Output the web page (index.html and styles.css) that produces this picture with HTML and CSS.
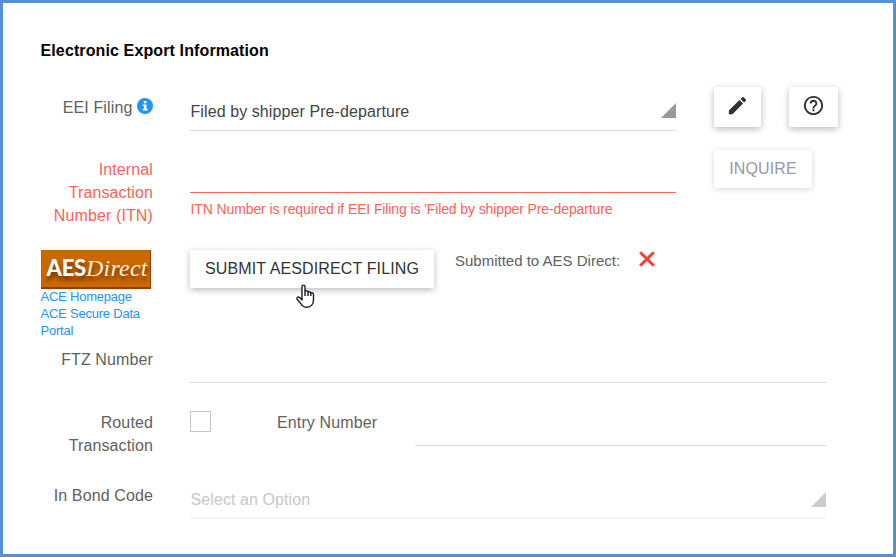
FILE: index.html
```
<!DOCTYPE html>
<html lang="en">
<head>
<meta charset="utf-8">
<title>Electronic Export Information</title>
<link rel="stylesheet" href="styles.css">
</head>
<body>
<main class="panel">
  <h1 class="title">Electronic Export Information</h1>
  <form class="form">
    <div class="row row-eei">
      <div class="label">EEI Filing <svg class="info" viewBox="0 0 16 16"><circle cx="8" cy="8" r="8" fill="#2196f3"/><path d="M6.8 3h2.6v2.2H6.8zM5.7 6.4h3.7v4.4h1.2v1.7H5.7v-1.7h1.2V8.1H5.7z" fill="#fff"/></svg></div>
      <div class="field medium"><span class="value">Filed by shipper Pre-departure</span><svg class="corner" viewBox="0 0 15 15"><path d="M15 0v15H0z"/></svg></div>
      <div class="actions">
        <button type="button" class="btn edit" aria-label="Edit"><svg viewBox="0 0 24 24"><path d="M3 17.25V21h3.75L17.81 9.94l-3.75-3.75L3 17.25zM20.71 7.04a1 1 0 0 0 0-1.41l-2.34-2.34a1 1 0 0 0-1.41 0l-1.83 1.83 3.75 3.75 1.83-1.83z"/></svg></button>
        <button type="button" class="btn help" aria-label="Help"><svg viewBox="0 0 24 24"><path d="M11 18h2v-2h-2v2zm1-16C6.48 2 2 6.48 2 12s4.48 10 10 10 10-4.48 10-10S17.52 2 12 2zm0 18c-4.41 0-8-3.59-8-8s3.59-8 8-8 8 3.59 8 8-3.59 8-8 8zm0-14c-2.21 0-4 1.79-4 4h2c0-1.1.9-2 2-2s2 .9 2 2c0 2-3 1.75-3 5h2c0-2.25 3-2.5 3-5 0-2.21-1.79-4-4-4z"/></svg></button>
      </div>
    </div>
    <div class="row row-itn">
      <div class="label invalid">Internal Transaction Number (ITN)</div>
      <div class="medium"><div class="field field-error"></div><div class="error">ITN Number is required if EEI Filing is 'Filed by shipper Pre-departure</div></div>
      <button type="button" class="btn inquire">INQUIRE</button>
    </div>
    <div class="row row-aes">
      <div class="portal">
        <div class="logo"><b>AES</b><i>Direct</i></div>
        <a>ACE Homepage</a><a>ACE Secure Data Portal</a>
      </div>
      <div class="submit-group">
        <button type="button" class="btn submit">SUBMIT AESDIRECT FILING</button>
        <svg class="cursor" viewBox="0 0 19 25"><path d="M6 16V2.8C6 .5 9 .5 9 2.8v4.6c.7-1 2.7-.7 3 .7.8-.8 2.5-.4 2.8.9 1.200-.7 2.700 0 2.700 1.500V16c0 4-2.500 7.300-6.500 7.300-3 0-4.500-1.200-6-3.500L1.300 15.500c-1.200-2 .8-3.400 2.400-1.900L6 16zM9 7.400V12M12 8.100V12M14.800 9V12" fill="#fff" stroke="#1c1c2b" stroke-width="1.400" stroke-linejoin="round"/></svg>
      </div>
      <span class="status">Submitted to AES Direct:</span>
      <svg class="cross" viewBox="0 0 16 16"><path d="M1.200 1.200l13.600 13.600M14.800 1.200L1.200 14.800" stroke="#f44336" stroke-width="3"/></svg>
    </div>
    <div class="row row-ftz">
      <div class="label">FTZ Number</div>
      <div class="field wide"></div>
    </div>
    <div class="row row-routed">
      <div class="label">Routed Transaction</div>
      <div class="checkbox"></div>
      <div class="entry-label">Entry Number</div>
      <div class="field entry"></div>
    </div>
    <div class="row row-bond">
      <div class="label">In Bond Code</div>
      <div class="field wide disabled"><span class="value">Select an Option</span><svg class="corner" viewBox="0 0 15 15"><path d="M15 0v15H0z"/></svg></div>
    </div>
  </form>
</main>
</body>
</html>
```
FILE: styles.css
```
* { box-sizing: border-box; }
body {
  margin: 0;
  font-family: "Liberation Sans", Arial, sans-serif;
  font-size: 16px;
  line-height: 23px;
  letter-spacing: .12px;
  color: #616161;
  background: #fff;
}
.panel {
  width: 896px;
  height: 557px;
  border: 3px solid #5590d5;
  padding: 36px 0 0 37px;
  overflow: hidden;
}
.title { margin: 0; padding-left: .5px; height: 57px; font-size: 16px; line-height: 23px; color: #000; }
.row { display: flex; align-items: flex-start; }
.row-eei { height: 62px; }
.row-itn { height: 90px; }
.row-aes { height: 100px; }
.row-ftz { height: 63px; }
.row-routed { height: 73px; }
.row-bond { height: 63px; }
.label { width: 113px; margin-right: 37px; flex: none; text-align: right; }
.invalid { color: #f9645c; }
.info { width: 16px; height: 16px; vertical-align: -1px; }
.field {
  display: flex;
  justify-content: space-between;
  height: 35px;
  border-bottom: 1px solid #dcdcdc;
}
.medium { width: 486px; flex: none; }
.wide { width: 636px; }
.entry { width: 411px; }
.field-error { border-color: #f9645c; }
.value { padding: 4px 0 0 .5px; letter-spacing: .09px; color: #444; }
.corner { width: 15px; height: 15px; margin-top: 7px; fill: #999; }
.disabled { border-color: #ededed; }
.disabled .value { color: #c8c8c8; }
.disabled .corner { margin-top: 8px; fill: #ccc; }
.error { font-size: 14px; line-height: 20px; letter-spacing: -.11px; padding: 6px 0 0 .5px; color: #f9645c; white-space: nowrap; }
.actions { display: flex; gap: 28px; margin: -9px 0 0 38px; }
.btn {
  display: flex;
  justify-content: center;
  align-items: center;
  padding: 0;
  border: 0;
  border-radius: 2px;
  background: #fff;
  color: #333;
  font: inherit;
  letter-spacing: .13px;
  box-shadow: 0 2px 7px rgba(0, 0, 0, .28);
}
.btn svg { width: 23px; height: 23px; fill: #303036; margin-bottom: 3px; }
.edit { width: 47px; height: 40px; }
.help { width: 49px; height: 40px; }
.inquire {
  width: 98px;
  height: 38px;
  padding-bottom: 2px;
  margin: -8px 0 0 38px;
  color: #999;
  box-shadow: 0 1px 6px rgba(0, 0, 0, .16);
}
.portal { width: 112px; margin: 2px 38px 0 0; flex: none; font-size: 13px; line-height: 17px; letter-spacing: -.22px; color: #2196f3; }
.portal a { display: block; padding-left: .5px; }
.logo {
  display: flex;
  align-items: center;
  justify-content: center;
  width: 110px;
  height: 39px;
  margin-left: 1px;
  margin-bottom: -1px;
  padding: 0 0 2px 2px;
  border: 1px solid #b5690c;
  border-right-color: #943d00;
  border-bottom: 2px solid #943d00;
  background: #cb6800;
  color: #fff;
  text-shadow: 1px 4px 4px #632f00;
}
.logo b { font: 900 22px/34px Lato, sans-serif; letter-spacing: -.2px; }
.logo i { font: italic 24px/34px "Liberation Serif", serif; letter-spacing: .2px; color: #fff1df; }
.submit-group { position: relative; margin-top: 2px; }
.submit { width: 244px; height: 38px; padding-bottom: 2px; }
.cursor { position: absolute; left: 106px; top: 34px; width: 19px; height: 25px; }
.status { margin: 1px 0 0 21px; font-size: 15px; letter-spacing: 0; white-space: nowrap; }
.cross { width: 16px; height: 16px; margin: 3px 0 0 19px; }
.checkbox { width: 21px; height: 21px; border: 1px solid #c5c5c5; }
.entry-label { width: 138px; padding-left: 66px; white-space: nowrap; }
.row-routed .entry { margin-left: 66px; }
```
